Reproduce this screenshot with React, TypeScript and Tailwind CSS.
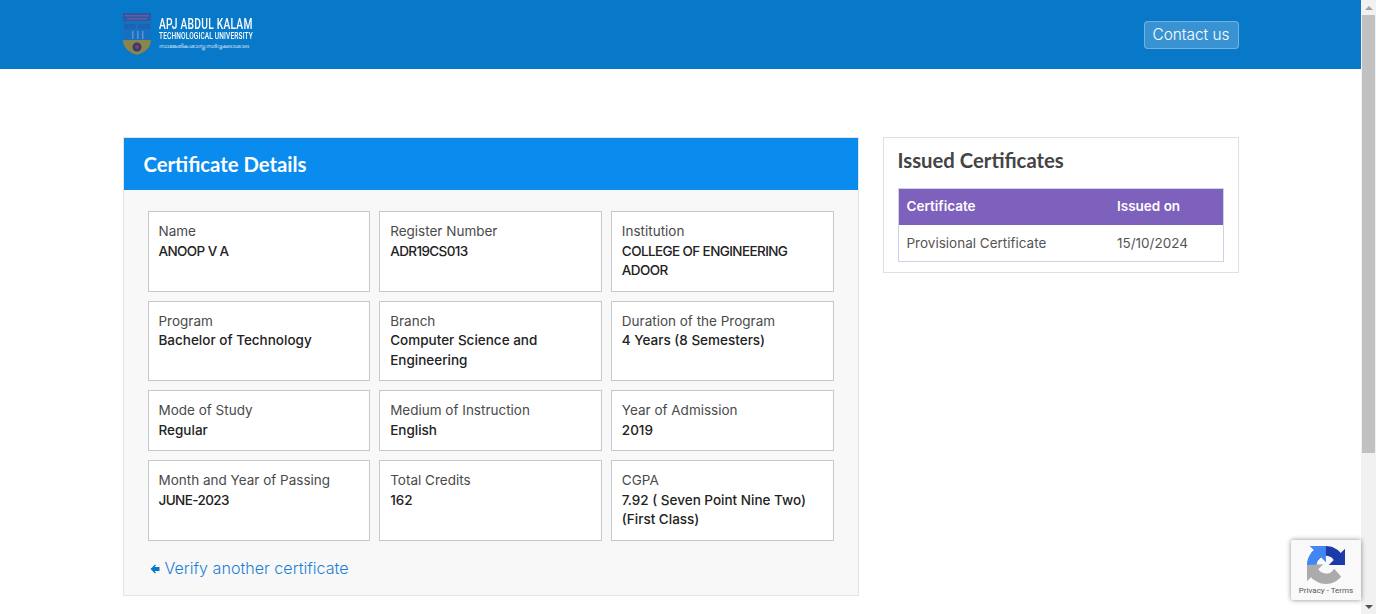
const details = [
  { label: "Name", value: "ANOOP V A", caps: true },
  { label: "Register Number", value: "ADR19CS013", caps: true },
  { label: "Institution", value: "COLLEGE OF ENGINEERING ADOOR", caps: true },
  { label: "Program", value: "Bachelor of Technology" },
  { label: "Branch", value: "Computer Science and Engineering" },
  { label: "Duration of the Program", value: "4 Years (8 Semesters)" },
  { label: "Mode of Study", value: "Regular" },
  { label: "Medium of Instruction", value: "English" },
  { label: "Year of Admission", value: "2019" },
  { label: "Month and Year of Passing", value: "JUNE-2023", caps: true },
  { label: "Total Credits", value: "162" },
  { label: "CGPA", value: "7.92 ( Seven Point Nine Two) (First Class)" },
];

function Logo() {
  return (
    <div className="flex items-start gap-[8px]">
      <svg className="blur-[0.4px]" width="28" height="44" viewBox="0 0 28 44">
        <rect x="0" y="1" width="28" height="8" fill="#2b58a6" />
        <rect x="2" y="3" width="24" height="1.5" fill="#6d5a9c" />
        <rect x="4" y="6" width="20" height="1.5" fill="#6d5a9c" />
        <rect x="0" y="9" width="28" height="19" fill="#1670c2" />
        <rect x="1" y="12" width="12" height="5" fill="#1d64b0" />
        <rect x="15" y="12" width="12" height="5" fill="#1d64b0" />
        <rect x="9" y="19" width="1.5" height="8" fill="#5f93cc" />
        <rect x="14" y="19" width="1.5" height="8" fill="#5f93cc" />
        <rect x="19" y="19" width="1.5" height="8" fill="#5f93cc" />
        <path d="M0 28H28C28 36 21 41 14 43C7 41 0 36 0 28Z" fill="#8c8548" />
        <circle cx="14" cy="35" r="4.5" fill="#2d3f7a" />
        <circle cx="14" cy="35" r="2" fill="#a8334a" />
      </svg>
      <div className="flex flex-col text-white font-['Roboto',sans-serif] mt-[5px]">
        <span className="text-[14px] leading-[14px] font-medium tracking-[0.35px] origin-left scale-x-[0.73] whitespace-nowrap">
          APJ ABDUL KALAM
        </span>
        <span className="text-[8.5px] leading-[10px] font-medium tracking-[0.2px] origin-left scale-x-[0.77] whitespace-nowrap">
          TECHNOLOGICAL UNIVERSITY
        </span>
        <span className="mt-[2px] text-[5.5px] leading-[6px] whitespace-nowrap text-white/85 font-['Noto_Sans',sans-serif]">
          സാങ്കേതിക ശാസ്ത്ര സർവ്വകലാശാല
        </span>
      </div>
    </div>
  );
}

function Recaptcha() {
  return (
    <div className="absolute left-[1291px] top-[540px] w-[70px] h-[60px] bg-[#f9f9f9] rounded-l-[2px] shadow-[0_0_5px_rgba(0,0,0,0.45)] flex flex-col items-center">
      <svg className="mt-[6px]" width="38" height="38" viewBox="0 0 64 64">
        <path
          d="M64 31.955l-.033-1.37V4.687l-7.16 7.16C50.948 4.674 42.033.093 32.05.093c-10.4 0-19.622 4.96-25.458 12.64l11.736 11.86a15.55 15.55 0 0 1 4.754-5.334c2.05-1.6 4.952-2.906 8.968-2.906.485 0 .86.057 1.135.163 4.976.393 9.288 3.14 11.828 7.124l-8.307 8.307L64 31.953"
          fill="#1c3aa9"
        />
        <path
          d="M31.862 0l-1.37.033H4.594l7.16 7.16C4.58 13.05 0 21.967 0 31.95c0 10.4 4.96 19.622 12.64 25.458L24.5 45.672a15.55 15.55 0 0 1-5.334-4.754c-1.6-2.05-2.906-4.952-2.906-8.968 0-.485.057-.86.163-1.135.393-4.976 3.14-9.288 7.124-11.828l8.307 8.307L31.86 0"
          fill="#4285f4"
        />
        <path
          d="M.001 31.95l.033 1.37v25.898l7.16-7.16c5.86 7.173 14.775 11.754 24.76 11.754 10.4 0 19.622-4.96 25.458-12.64L45.677 38.3a15.55 15.55 0 0 1-4.754 5.334c-2.05 1.6-4.952 2.906-8.968 2.906-.485 0-.86-.057-1.135-.163-4.976-.393-9.288-3.14-11.828-7.124l8.307-8.307L.001 31.95"
          fill="#ababab"
        />
      </svg>
      <div className="mt-[2px] text-[8px] leading-[10px] text-[#555] font-['Roboto',sans-serif] whitespace-nowrap">
        Privacy - Terms
      </div>
    </div>
  );
}

function ScrollBar() {
  return (
    <div className="w-[15px] bg-[#f1f1f1] flex flex-col items-center shrink-0">
      <div className="h-[15px] flex items-center justify-center">
        <div className="w-0 h-0 border-x-[4px] border-x-transparent border-b-[4px] border-b-[#a3a3a3]" />
      </div>
      <div className="w-full bg-[#c1c1c1] h-[438px] border-x border-[#f1f1f1]" />
      <div className="flex-1" />
      <div className="h-[15px] flex items-center justify-center">
        <div className="w-0 h-0 border-x-[4px] border-x-transparent border-t-[4px] border-t-[#505050]" />
      </div>
    </div>
  );
}

export default function App() {
  return (
    <div className="relative flex h-[614px] overflow-hidden bg-white font-['Inter',sans-serif]">
      <div className="flex-1 min-w-0">
        <header className="h-[69px] bg-[#0878c9]">
          <div className="w-[1116px] mx-auto flex items-start justify-between pt-[12px]">
            <Logo />
            <button className="mt-[9px] w-[95px] h-[28px] rounded-[4px] border border-white/30 bg-white/20 text-[15.4px] font-light text-white">
              Contact us
            </button>
          </div>
        </header>

        <main className="w-[1116px] mx-auto mt-[68px] flex items-start gap-[24px]">
          <section className="w-[736px] border border-[#e3e3e3] bg-[#f8f8f8]">
            <h2 className="h-[52px] bg-[#0a8cee] pl-[20px] flex items-center text-white font-['Lato',sans-serif] font-bold text-[20.3px]">
              Certificate Details
            </h2>
            <div className="px-[24px] pt-[21px] pb-[16px]">
              <div className="grid grid-cols-3 gap-[9px]">
                {details.map((d) => (
                  <div key={d.label} className="border border-[#c8c8c8] bg-white p-[10px] text-[13.5px] leading-[19.5px]">
                    <div className="text-[#4a4a4a]">{d.label}</div>
                    <div className={d.caps ? "font-medium text-[#222] tracking-[-0.6px]" : "font-medium text-[#222]"}>
                      {d.value}
                    </div>
                  </div>
                ))}
              </div>
              <a className="mt-[16px] ml-[2px] flex items-center gap-[5px] text-[16.1px] leading-[22px] font-light text-[#1d7fd6]">
                <svg width="10" height="10" viewBox="0 0 10 10" className="mt-[3px]">
                  <path d="M5 0.5L0.5 5L5 9.5L6 8.5L4.5 7H9.5V3H4.5L6 1.5Z" fill="#0878c9" />
                </svg>
                Verify another certificate
              </a>
            </div>
          </section>

          <aside className="flex-1 border border-[#dde1e6] bg-white px-[14px] pt-[9px] pb-[10px]">
            <h3 className="font-['Lato',sans-serif] font-bold text-[20.3px] leading-[26px] text-[#444]">Issued Certificates</h3>
            <table className="mt-[15px] w-full border border-[#c9d5e6] text-[13.5px] border-collapse">
              <thead>
                <tr className="bg-[#7e60bd] text-white h-[36px]">
                  <th className="text-left font-semibold pl-[8px] pb-[2px] w-[211px]">Certificate</th>
                  <th className="text-left font-semibold pl-[8px] pb-[2px]">Issued on</th>
                </tr>
              </thead>
              <tbody>
                <tr className="h-[37px] text-[#555]">
                  <td className="pl-[8px]">Provisional Certificate</td>
                  <td className="pl-[8px]">15/10/2024</td>
                </tr>
              </tbody>
            </table>
          </aside>
        </main>
      </div>
      <ScrollBar />
      <Recaptcha />
    </div>
  );
}
